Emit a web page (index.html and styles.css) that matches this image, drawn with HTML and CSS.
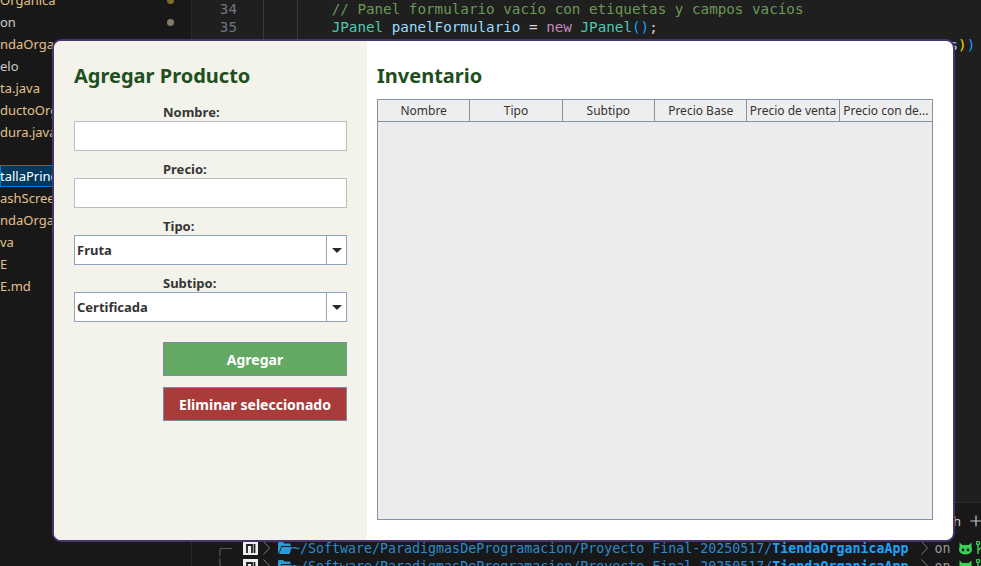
FILE: index.html
```html
<!DOCTYPE html>
<html lang="es">
<head>
<meta charset="utf-8">
<title>Tienda Orgánica - Inventario</title>
<link rel="stylesheet" href="styles.css">
</head>
<body>
<div class="desktop">
  <aside class="explorer">
    <div class="tree">
      <div class="row mod"><span>Organica</span><span class="dot dot-olive"></span></div>
      <div class="row"><span>on</span><span class="dot dot-gray"></span></div>
      <div class="row mod"><span>ndaOrganica</span></div>
      <div class="row"><span>elo</span></div>
      <div class="row mod"><span>ta.java</span></div>
      <div class="row mod"><span>ductoOrganico.java</span></div>
      <div class="row mod"><span>dura.java</span></div>
      <div class="row"><span></span></div>
      <div class="row sel"><span>tallaPrincipal.java</span></div>
      <div class="row mod"><span>ashScreen.java</span></div>
      <div class="row mod"><span>ndaOrganicaApp.java</span></div>
      <div class="row mod"><span>va</span></div>
      <div class="row mod"><span>E</span></div>
      <div class="row mod"><span>E.md</span></div>
    </div>
  </aside>

  <main class="editor">
    <div class="code">
      <div class="line"><span class="ln">34</span><span class="src">        <span class="t-comment">// Panel formulario vacío con etiquetas y campos vacíos</span></span></div>
      <div class="line"><span class="ln">35</span><span class="src">        <span class="t-type">JPanel</span> <span class="t-var">panelFormulario</span> = <span class="t-kw">new</span> <span class="t-type">JPanel</span><span class="t-br3">()</span>;</span></div>
      <div class="line"><span class="ln">36</span><span class="src">        <span class="t-var">panelFormulario</span>.<span class="t-fn">setLayout</span><span class="t-br1">(</span><span class="t-kw">new</span> <span class="t-type">GridLayout</span><span class="t-br2">(</span><span class="t-num">10</span>, <span class="t-num">2</span>, <span class="t-var">margenHorizontal</span>, <span class="t-var">margens</span><span class="t-br2">)</span><span class="t-br3">)</span></span></div>
    </div>

    <section class="panel">
      <div class="panel-tabs">
        <span class="tab-name">bash</span>
        <svg class="plus" width="12" height="12" viewBox="0 0 12 12"><path d="M6 0.5V11.5M0.5 6H11.5" stroke="#c5c5c5" stroke-width="1.2" fill="none"/></svg>
      </div>
      <div class="term">
        <div class="term-line">
          <span class="corner">╭─</span>
          <svg class="os-icon" width="15" height="14" viewBox="0 0 15 14"><rect x="0" y="0" width="15" height="14" fill="#ededed"/><path d="M4 12V4H9V12" stroke="#1f1f1f" stroke-width="1.8" fill="none"/><path d="M11.5 3V12" stroke="#1f1f1f" stroke-width="1.8"/></svg>
          <svg class="chev" width="7" height="14" viewBox="0 0 7 14"><polyline points="0.5,0.5 6.5,7 0.5,13.5" fill="none" stroke="#7a7a7a" stroke-width="1"/></svg>
          <svg class="folder" width="14" height="12" viewBox="0 0 14 12"><path d="M0 1.5C0 0.7 0.6 0 1.4 0H5L6.5 1.6H11.4C12.2 1.6 12.6 2.1 12.6 2.8V4H3.3L0.9 11H0Z" fill="#2d9ad8"/><path d="M3.8 5H14L11.5 12H1.2Z" fill="#2d9ad8"/></svg>
          <span class="path">~/Software/ParadigmasDeProgramacion/Proyecto Final-20250517/<b class="repo">TiendaOrganicaApp</b></span>
          <svg class="chev chev-2" width="7" height="14" viewBox="0 0 7 14"><polyline points="0.5,0.5 6.5,7 0.5,13.5" fill="none" stroke="#7a7a7a" stroke-width="1"/></svg>
          <span class="on">on</span>
          <svg class="gh" width="15" height="13" viewBox="0 0 15 13"><path d="M1.5 0.5L4.3 3H10.7L13.5 0.5V5.5C14.6 7 14.4 12.5 7.5 12.5C0.6 12.5 0.4 7 1.5 5.5Z" fill="#39d353"/><circle cx="5" cy="8" r="1.4" fill="#181818"/><circle cx="10" cy="8" r="1.4" fill="#181818"/></svg>
          <svg class="branch" width="10" height="14" viewBox="0 0 10 14"><circle cx="2" cy="2" r="1.6" fill="none" stroke="#39d353" stroke-width="1.4"/><path d="M2 3.6V13M2 10C2 7 8 7 8 4" fill="none" stroke="#39d353" stroke-width="1.4"/><circle cx="8" cy="2.6" r="1.6" fill="none" stroke="#39d353" stroke-width="1.4"/></svg>
        </div>
        <div class="term-line">
          <span class="corner">╰─</span>
          <svg class="os-icon" width="15" height="14" viewBox="0 0 15 14"><rect x="0" y="0" width="15" height="14" fill="#ededed"/><path d="M4 12V4H9V12" stroke="#1f1f1f" stroke-width="1.8" fill="none"/><path d="M11.5 3V12" stroke="#1f1f1f" stroke-width="1.8"/></svg>
          <svg class="chev" width="7" height="14" viewBox="0 0 7 14"><polyline points="0.5,0.5 6.5,7 0.5,13.5" fill="none" stroke="#7a7a7a" stroke-width="1"/></svg>
          <svg class="folder" width="14" height="12" viewBox="0 0 14 12"><path d="M0 1.5C0 0.7 0.6 0 1.4 0H5L6.5 1.6H11.4C12.2 1.6 12.6 2.1 12.6 2.8V4H3.3L0.9 11H0Z" fill="#2d9ad8"/><path d="M3.8 5H14L11.5 12H1.2Z" fill="#2d9ad8"/></svg>
          <span class="path">~/Software/ParadigmasDeProgramacion/Proyecto Final-20250517/<b class="repo">TiendaOrganicaApp</b></span>
          <svg class="chev chev-2" width="7" height="14" viewBox="0 0 7 14"><polyline points="0.5,0.5 6.5,7 0.5,13.5" fill="none" stroke="#7a7a7a" stroke-width="1"/></svg>
          <span class="on">on</span>
          <svg class="gh" width="15" height="13" viewBox="0 0 15 13"><path d="M1.5 0.5L4.3 3H10.7L13.5 0.5V5.5C14.6 7 14.4 12.5 7.5 12.5C0.6 12.5 0.4 7 1.5 5.5Z" fill="#39d353"/><circle cx="5" cy="8" r="1.4" fill="#181818"/><circle cx="10" cy="8" r="1.4" fill="#181818"/></svg>
          <svg class="branch" width="10" height="14" viewBox="0 0 10 14"><circle cx="2" cy="2" r="1.6" fill="none" stroke="#39d353" stroke-width="1.4"/><path d="M2 3.6V13M2 10C2 7 8 7 8 4" fill="none" stroke="#39d353" stroke-width="1.4"/><circle cx="8" cy="2.6" r="1.6" fill="none" stroke="#39d353" stroke-width="1.4"/></svg>
        </div>
      </div>
    </section>
  </main>

  <div class="window">
    <section class="form-pane">
      <h1 class="pane-title">Agregar Producto</h1>
      <div class="field">
        <label class="field-label">Nombre:</label>
        <div class="input"></div>
      </div>
      <div class="field">
        <label class="field-label">Precio:</label>
        <div class="input"></div>
      </div>
      <div class="field">
        <label class="field-label">Tipo:</label>
        <div class="combo"><span class="combo-value">Fruta</span><span class="combo-btn"><span class="arrow"></span></span></div>
      </div>
      <div class="field">
        <label class="field-label">Subtipo:</label>
        <div class="combo"><span class="combo-value">Certificada</span><span class="combo-btn"><span class="arrow"></span></span></div>
      </div>
      <div class="actions">
        <button class="btn btn-add">Agregar</button>
        <button class="btn btn-del">Eliminar seleccionado</button>
      </div>
    </section>

    <section class="inventory-pane">
      <h1 class="pane-title pane-title-table">Inventario</h1>
      <div class="table">
        <div class="thead">
          <div class="th">Nombre</div>
          <div class="th">Tipo</div>
          <div class="th">Subtipo</div>
          <div class="th">Precio Base</div>
          <div class="th">Precio de venta</div>
          <div class="th">Precio con de...</div>
        </div>
        <div class="tbody"></div>
      </div>
    </section>
  </div>
</div>
</body>
</html>
```

FILE: styles.css
```css
* {
  box-sizing: border-box;
  margin: 0;
  padding: 0;
}

html,
body {
  width: 981px;
  height: 566px;
  overflow: hidden;
  background: #1f1f1f;
}

body {
  font-family: "Noto Sans", "DejaVu Sans", sans-serif;
}

.desktop {
  position: relative;
  width: 981px;
  height: 566px;
  display: flex;
  overflow: hidden;
  background: #1f1f1f;
}

/* ---------- explorer ---------- */
.explorer {
  width: 192px;
  flex: none;
  background: #181818;
  border-right: 1px solid #2b2b2b;
  overflow: hidden;
}

.tree {
  margin-top: -11px;
}

.row {
  height: 22px;
  display: flex;
  align-items: center;
  justify-content: space-between;
  padding-right: 17px;
  font-size: 13px;
  color: #cccccc;
  white-space: nowrap;
  overflow: hidden;
}

.row.mod {
  color: #e2c08d;
}

.row.sel {
  background: #04395e;
  box-shadow: inset 0 0 0 1px #0078d4;
  color: #ffffff;
}

.dot {
  width: 7px;
  height: 7px;
  border-radius: 50%;
  flex: none;
}

.dot-olive {
  background: #7d6c2c;
}

.dot-gray {
  background: #857a66;
}

/* ---------- editor ---------- */
.editor {
  flex: 1;
  min-width: 0;
  display: flex;
  flex-direction: column;
}

.code {
  flex: 1;
  font-family: "DejaVu Sans Mono", "Liberation Mono", monospace;
  font-size: 14.25px;
  line-height: 18px;
  overflow: hidden;
}

.line {
  display: flex;
  height: 18px;
  white-space: pre;
}

.ln {
  width: 45px;
  flex: none;
  text-align: right;
  color: #6e7681;
}

.src {
  margin-left: 26px;
  color: #d4d4d4;
  background-image: linear-gradient(#3a3a3a, #3a3a3a), linear-gradient(#3a3a3a, #3a3a3a);
  background-size: 1px 100%;
  background-position: 0 0, 34px 0;
  background-repeat: no-repeat;
}

.t-comment { color: #6a9955; }
.t-type { color: #4ec9b0; }
.t-var { color: #9cdcfe; }
.t-kw { color: #c586c0; }
.t-fn { color: #dcdcaa; }
.t-num { color: #b5cea8; }
.t-br1 { color: #179fff; }
.t-br2 { color: #ffd700; }
.t-br3 { color: #179fff; }

/* ---------- terminal panel ---------- */
.panel {
  height: 64px;
  flex: none;
  background: #181818;
  border-top: 1px solid #2b2b2b;
  overflow: hidden;
}

.panel-tabs {
  height: 36px;
  display: flex;
  align-items: center;
  justify-content: flex-end;
  gap: 9px;
  color: #cccccc;
  font-size: 13px;
}

.plus {
  margin-right: -1px;
}

.term {
  font-family: "DejaVu Sans Mono", "Liberation Mono", monospace;
  font-size: 13.3px;
}

.term-line {
  height: 18px;
  display: flex;
  align-items: center;
  padding-left: 24px;
  white-space: pre;
}

.corner {
  color: #5c5c5c;
}

.os-icon {
  margin-left: 11px;
  flex: none;
}

.chev {
  margin-left: 5px;
  flex: none;
}

.folder {
  margin-left: 8px;
  flex: none;
}

.path {
  color: #2b8ccb;
}

.repo {
  color: #1aa3ff;
  font-weight: 700;
}

.chev-2 {
  margin-left: 13px;
}

.on {
  margin-left: 6px;
  color: #9a9a9a;
}

.gh {
  margin-left: 8px;
  flex: none;
}

.branch {
  margin-left: 3px;
  flex: none;
}

/* ---------- application window ---------- */
.window {
  position: absolute;
  left: 52px;
  top: 39px;
  width: 903px;
  height: 503px;
  border: 2px solid #4a3470;
  border-radius: 9px;
  overflow: hidden;
  display: flex;
  background: #ffffff;
}

.form-pane {
  width: 313px;
  flex: none;
  background: #f3f3eb;
  padding: 22px 20px 0 20px;
  display: flex;
  flex-direction: column;
}

.pane-title {
  font-size: 20px;
  font-weight: 700;
  line-height: 26px;
  color: #1f4f21;
  margin-bottom: 14px;
}

.pane-title-table {
  margin-bottom: 10px;
}

.field {
  margin-bottom: 9px;
}

.field-label {
  display: block;
  padding-left: 89px;
  font-size: 13px;
  font-weight: 700;
  line-height: 18px;
  color: #363636;
}

.input {
  height: 30px;
  background: #ffffff;
  border: 1px solid #bdbdbd;
}

.combo {
  height: 30px;
  display: flex;
  background: #ffffff;
  border: 1px solid #8ea4bd;
}

.combo-value {
  flex: 1;
  padding-left: 2px;
  font-size: 13px;
  font-weight: 700;
  line-height: 28px;
  color: #333333;
  border-right: 1px solid #8ea4bd;
}

.combo-btn {
  width: 19px;
  flex: none;
  display: flex;
  align-items: center;
  justify-content: center;
  background: #ffffff;
}

.arrow {
  width: 0;
  height: 0;
  border-left: 5px solid transparent;
  border-right: 5px solid transparent;
  border-top: 5px solid #2b2b2b;
}

.actions {
  margin-top: 11px;
  padding-left: 89px;
  display: flex;
  flex-direction: column;
  gap: 11px;
}

.btn {
  height: 34px;
  border: 1px solid #7b8a9e;
  color: #ffffff;
  font-family: "Noto Sans", "DejaVu Sans", sans-serif;
  font-size: 14px;
  font-weight: 700;
}

.btn-add {
  background: #63a863;
}

.btn-del {
  background: #a93b3b;
}

.inventory-pane {
  flex: 1;
  padding: 22px 20px 20px 10px;
  display: flex;
  flex-direction: column;
}

.table {
  flex: 1;
  display: flex;
  flex-direction: column;
  border: 1px solid #8393a5;
  background: #ececec;
}

.thead {
  display: grid;
  grid-template-columns: repeat(6, 1fr);
  background: #eeeeee;
  border-bottom: 1px solid #8393a5;
}

.th {
  height: 21px;
  line-height: 21px;
  text-align: center;
  font-size: 12px;
  color: #333333;
  border-right: 1px solid #8393a5;
  white-space: nowrap;
  overflow: hidden;
}

.th:last-child {
  border-right: 0;
}

.tbody {
  flex: 1;
}
```
